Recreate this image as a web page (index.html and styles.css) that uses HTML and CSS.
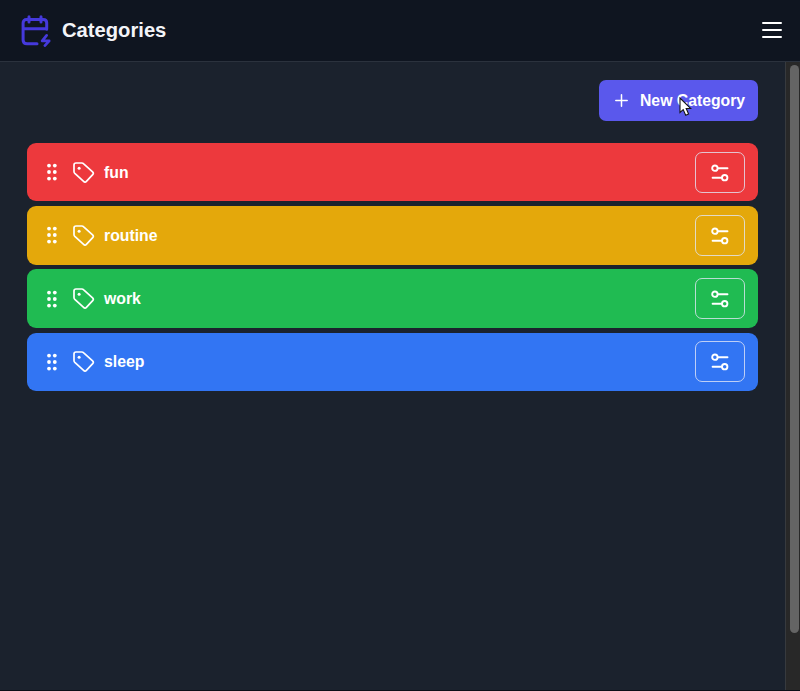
FILE: index.html
```html
<!DOCTYPE html>
<html lang="en">
<head>
<meta charset="utf-8">
<title>Categories</title>
<link rel="stylesheet" href="styles.css">
</head>
<body>
<svg class="defs" width="0" height="0">
  <symbol id="grip" viewBox="0 0 12 18"><g fill="currentColor"><circle cx="3" cy="2.6" r="1.9"/><circle cx="8.8" cy="2.6" r="1.9"/><circle cx="3" cy="9" r="1.9"/><circle cx="8.8" cy="9" r="1.9"/><circle cx="3" cy="15.6" r="1.9"/><circle cx="8.8" cy="15.6" r="1.9"/></g></symbol>
  <symbol id="tag" viewBox="0 0 22 22"><path d="M3 1H8.8Q9.9 1 10.7 1.8L19.6 9.8Q21 11.2 19.7 12.6L13.4 19.3Q12 20.8 10.6 19.4L1.8 11.4Q1 10.6 1 9.5V3Q1 1 3 1Z" fill="none" stroke="currentColor" stroke-width="1.7" stroke-linejoin="round"/><circle cx="6.1" cy="6.2" r="1.5" fill="currentColor"/></symbol>
  <symbol id="sliders" viewBox="0 0 18 18"><g fill="none" stroke="currentColor" stroke-width="1.9" stroke-linecap="round"><circle cx="3.9" cy="4.2" r="2.7"/><path d="M7 4.2H16.5M1.6 13.7H10.6"/><circle cx="13.7" cy="13.7" r="2.7"/></g></symbol>
</svg>
<div class="app">
  <header class="header">
    <svg class="logo" width="30" height="32" viewBox="0 0 30 32"><g fill="none" stroke="currentColor" stroke-width="3" stroke-linecap="round" stroke-linejoin="round"><path d="M16 28.8H6Q2.1 28.8 2.1 25V8Q2.1 4.6 5.5 4.6H22.2Q25.7 4.6 25.7 8V14.2M2.1 13.8H25.7M8 1.8V7M20 1.8V7"/></g><path d="M25.6 20.4L21.2 25.9H28.2L23.9 30.6" fill="none" stroke="currentColor" stroke-width="2.7" stroke-linejoin="round" stroke-linecap="round"/></svg>
    <h1 class="title">Categories</h1>
    <div class="menu"><span></span><span></span><span></span></div>
  </header>
  <div class="body">
    <main class="main">
      <button class="new">
        <svg class="plus" width="13" height="13" viewBox="0 0 13 13"><path d="M6.5 .8V12.2M.8 6.5H12.2" stroke="currentColor" stroke-width="1.5" stroke-linecap="round"/></svg>
        <span>New Category</span>
        <svg class="cursor" width="13" height="20" viewBox="0 0 13 20"><path d="M1 1V15.5L4.2 12.6L6.7 18.3L9.6 17L7.2 11.5H11.8Z" fill="#fff" stroke="#151515" stroke-width="1.1"/></svg>
      </button>
      <ul class="list">
        <li class="row red"><svg class="grip"><use href="#grip"/></svg><svg class="tag"><use href="#tag"/></svg><span class="name">fun</span><button class="edit"><svg class="sliders"><use href="#sliders"/></svg></button></li>
        <li class="row amber"><svg class="grip"><use href="#grip"/></svg><svg class="tag"><use href="#tag"/></svg><span class="name">routine</span><button class="edit"><svg class="sliders"><use href="#sliders"/></svg></button></li>
        <li class="row green"><svg class="grip"><use href="#grip"/></svg><svg class="tag"><use href="#tag"/></svg><span class="name">work</span><button class="edit"><svg class="sliders"><use href="#sliders"/></svg></button></li>
        <li class="row blue"><svg class="grip"><use href="#grip"/></svg><svg class="tag"><use href="#tag"/></svg><span class="name">sleep</span><button class="edit"><svg class="sliders"><use href="#sliders"/></svg></button></li>
      </ul>
    </main>
    <div class="scrollbar"><div class="thumb"></div></div>
  </div>
</div>
</body>
</html>
```
FILE: styles.css
```css
* { box-sizing: border-box; }
body { margin: 0; background: #1b222d; color: #fff; font-family: "Liberation Sans", Arial, sans-serif; overflow: hidden; }
.defs { position: absolute; }
.app { display: flex; flex-direction: column; height: 691px; border-bottom: 1px solid #0c1018; }
.header { display: flex; align-items: center; height: 62px; flex: none; padding: 0 18px 1px 21px; background: #0f1520; border-bottom: 1px solid #2b323d; }
.logo { color: #4539dc; margin-top: 1px; }
.title { flex: 1; margin: 0 0 0 11px; font-size: 20.2px; line-height: 24px; font-weight: 700; color: #f3f4f8; }
.menu { display: flex; flex-direction: column; gap: 4.5px; width: 20.5px; }
.menu span { height: 2.3px; border-radius: 1px; background: #fff; }
.body { display: flex; flex: 1; min-height: 0; }
.main { flex: 1; display: flex; flex-direction: column; padding: 18px 27px 0; background: #1b222d; }
button { font: inherit; color: inherit; padding: 0; border: 0; }
.new { position: relative; align-self: flex-end; display: flex; align-items: center; width: 159px; height: 41px; padding-left: 16px; gap: 12px; border-radius: 7px; background: #5a58ec; font-size: 15.75px; font-weight: 700; white-space: nowrap; }
.cursor { position: absolute; left: 80px; top: 17px; }
.list { display: flex; flex-direction: column; gap: 4.8px; margin: 22px 0 0; padding: 0; list-style: none; }
.row { display: flex; align-items: center; height: 58.4px; padding: 0 13px 0 19px; border-radius: 9px; }
.red { background: #ed393d; }
.amber { background: #e4a80b; }
.green { background: #20bb52; }
.blue { background: #3275f3; }
.grip { width: 12px; height: 18px; margin-right: 15px; }
.tag { width: 22px; height: 22px; margin: 1px 9px 0 0; }
.name { flex: 1; padding-top: 1px; font-size: 15.8px; line-height: 24px; font-weight: 700; }
.edit { display: flex; align-items: center; justify-content: center; width: 50px; height: 41px; border: 1px solid rgba(225, 230, 245, .8); border-radius: 7px; background: transparent; }
.sliders { width: 18px; height: 18px; margin-top: 1px; }
.scrollbar { width: 15px; padding: 3px 1px 0 4px; background: #282828; border-left: 1px solid #373a3e; }
.thumb { width: 9px; height: 568px; border-radius: 5px; background: #646464; }
```
